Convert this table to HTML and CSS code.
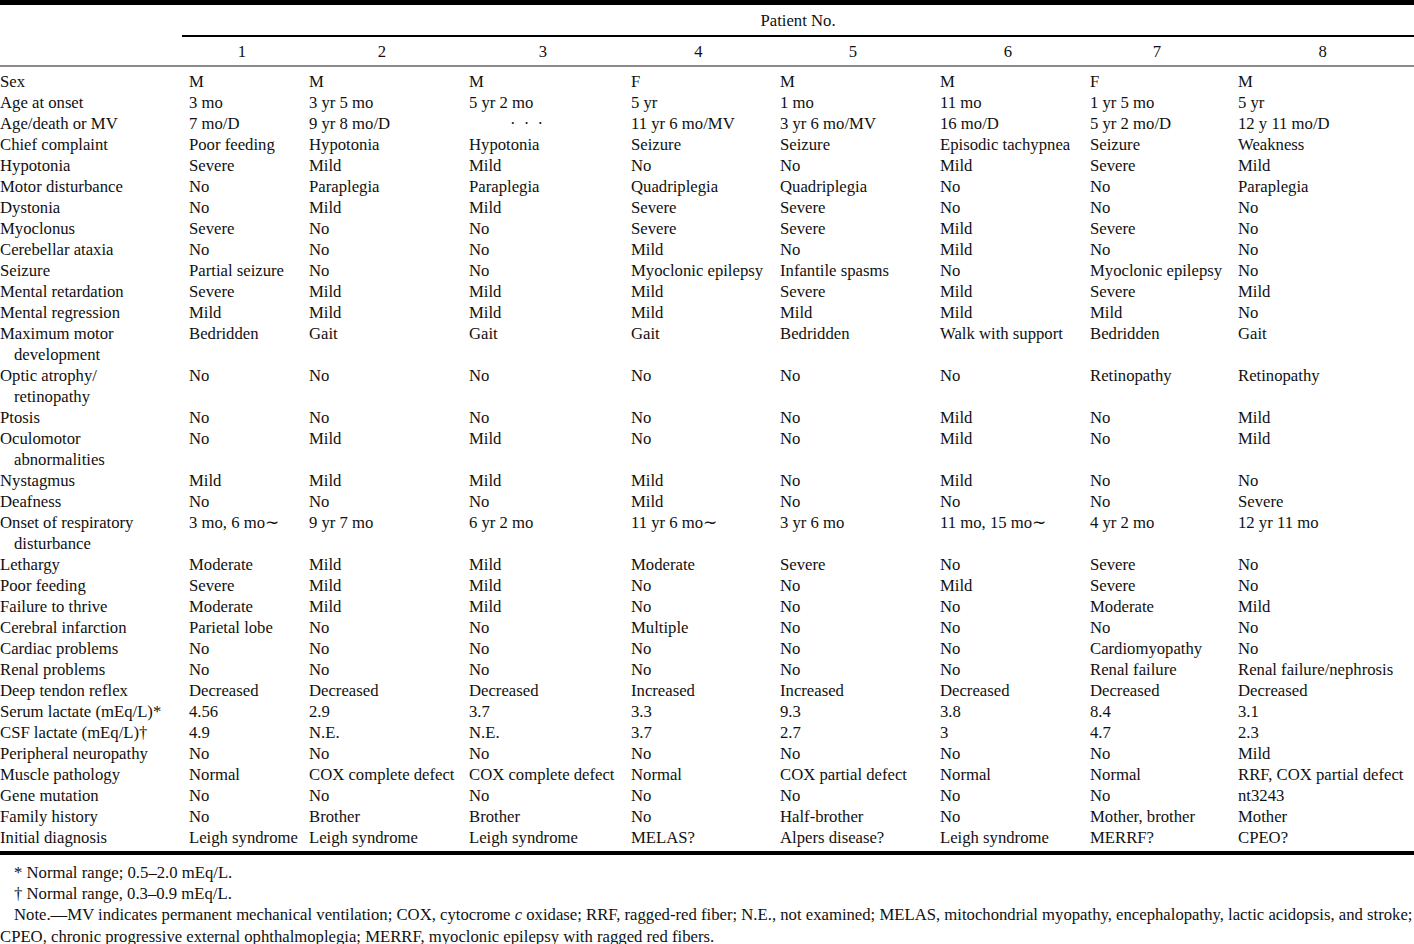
FILE: index.html
```html
<!DOCTYPE html>
<html>
<head>
<meta charset="utf-8">
<link rel="stylesheet" href="styles.css">
</head>
<body>
<table class="tbl">
<colgroup>
<col class="c-label"><col class="c1"><col class="c2"><col class="c3"><col class="c4"><col class="c5"><col class="c6"><col class="c7"><col class="c8">
</colgroup>
<thead>
<tr class="h1"><th></th><th colspan="8" class="span">Patient No.</th></tr>
<tr class="h2"><th></th><th>1</th><th>2</th><th>3</th><th>4</th><th>5</th><th>6</th><th>7</th><th>8</th></tr>
</thead>
<tbody>
<tr class="first"><td class="lab">Sex</td><td>M</td><td>M</td><td>M</td><td>F</td><td>M</td><td>M</td><td>F</td><td>M</td></tr>
<tr><td class="lab">Age at onset</td><td>3 mo</td><td>3 yr 5 mo</td><td>5 yr 2 mo</td><td>5 yr</td><td>1 mo</td><td>11 mo</td><td>1 yr 5 mo</td><td>5 yr</td></tr>
<tr><td class="lab">Age/death or MV</td><td>7 mo/D</td><td>9 yr 8 mo/D</td><td><span class="dots">· · ·</span></td><td>11 yr 6 mo/MV</td><td>3 yr 6 mo/MV</td><td>16 mo/D</td><td>5 yr 2 mo/D</td><td>12 y 11 mo/D</td></tr>
<tr><td class="lab">Chief complaint</td><td>Poor feeding</td><td>Hypotonia</td><td>Hypotonia</td><td>Seizure</td><td>Seizure</td><td>Episodic tachypnea</td><td>Seizure</td><td>Weakness</td></tr>
<tr><td class="lab">Hypotonia</td><td>Severe</td><td>Mild</td><td>Mild</td><td>No</td><td>No</td><td>Mild</td><td>Severe</td><td>Mild</td></tr>
<tr><td class="lab">Motor disturbance</td><td>No</td><td>Paraplegia</td><td>Paraplegia</td><td>Quadriplegia</td><td>Quadriplegia</td><td>No</td><td>No</td><td>Paraplegia</td></tr>
<tr><td class="lab">Dystonia</td><td>No</td><td>Mild</td><td>Mild</td><td>Severe</td><td>Severe</td><td>No</td><td>No</td><td>No</td></tr>
<tr><td class="lab">Myoclonus</td><td>Severe</td><td>No</td><td>No</td><td>Severe</td><td>Severe</td><td>Mild</td><td>Severe</td><td>No</td></tr>
<tr><td class="lab">Cerebellar ataxia</td><td>No</td><td>No</td><td>No</td><td>Mild</td><td>No</td><td>Mild</td><td>No</td><td>No</td></tr>
<tr><td class="lab">Seizure</td><td>Partial seizure</td><td>No</td><td>No</td><td>Myoclonic epilepsy</td><td>Infantile spasms</td><td>No</td><td>Myoclonic epilepsy</td><td>No</td></tr>
<tr><td class="lab">Mental retardation</td><td>Severe</td><td>Mild</td><td>Mild</td><td>Mild</td><td>Severe</td><td>Mild</td><td>Severe</td><td>Mild</td></tr>
<tr><td class="lab">Mental regression</td><td>Mild</td><td>Mild</td><td>Mild</td><td>Mild</td><td>Mild</td><td>Mild</td><td>Mild</td><td>No</td></tr>
<tr><td class="lab">Maximum motor<br>development</td><td>Bedridden</td><td>Gait</td><td>Gait</td><td>Gait</td><td>Bedridden</td><td>Walk with support</td><td>Bedridden</td><td>Gait</td></tr>
<tr><td class="lab">Optic atrophy/<br>retinopathy</td><td>No</td><td>No</td><td>No</td><td>No</td><td>No</td><td>No</td><td>Retinopathy</td><td>Retinopathy</td></tr>
<tr><td class="lab">Ptosis</td><td>No</td><td>No</td><td>No</td><td>No</td><td>No</td><td>Mild</td><td>No</td><td>Mild</td></tr>
<tr><td class="lab">Oculomotor<br>abnormalities</td><td>No</td><td>Mild</td><td>Mild</td><td>No</td><td>No</td><td>Mild</td><td>No</td><td>Mild</td></tr>
<tr><td class="lab">Nystagmus</td><td>Mild</td><td>Mild</td><td>Mild</td><td>Mild</td><td>No</td><td>Mild</td><td>No</td><td>No</td></tr>
<tr><td class="lab">Deafness</td><td>No</td><td>No</td><td>No</td><td>Mild</td><td>No</td><td>No</td><td>No</td><td>Severe</td></tr>
<tr><td class="lab">Onset of respiratory<br>disturbance</td><td>3 mo, 6 mo∼</td><td>9 yr 7 mo</td><td>6 yr 2 mo</td><td>11 yr 6 mo∼</td><td>3 yr 6 mo</td><td>11 mo, 15 mo∼</td><td>4 yr 2 mo</td><td>12 yr 11 mo</td></tr>
<tr><td class="lab">Lethargy</td><td>Moderate</td><td>Mild</td><td>Mild</td><td>Moderate</td><td>Severe</td><td>No</td><td>Severe</td><td>No</td></tr>
<tr><td class="lab">Poor feeding</td><td>Severe</td><td>Mild</td><td>Mild</td><td>No</td><td>No</td><td>Mild</td><td>Severe</td><td>No</td></tr>
<tr><td class="lab">Failure to thrive</td><td>Moderate</td><td>Mild</td><td>Mild</td><td>No</td><td>No</td><td>No</td><td>Moderate</td><td>Mild</td></tr>
<tr><td class="lab">Cerebral infarction</td><td>Parietal lobe</td><td>No</td><td>No</td><td>Multiple</td><td>No</td><td>No</td><td>No</td><td>No</td></tr>
<tr><td class="lab">Cardiac problems</td><td>No</td><td>No</td><td>No</td><td>No</td><td>No</td><td>No</td><td>Cardiomyopathy</td><td>No</td></tr>
<tr><td class="lab">Renal problems</td><td>No</td><td>No</td><td>No</td><td>No</td><td>No</td><td>No</td><td>Renal failure</td><td>Renal failure/nephrosis</td></tr>
<tr><td class="lab">Deep tendon reflex</td><td>Decreased</td><td>Decreased</td><td>Decreased</td><td>Increased</td><td>Increased</td><td>Decreased</td><td>Decreased</td><td>Decreased</td></tr>
<tr><td class="lab">Serum lactate (mEq/L)*</td><td>4.56</td><td>2.9</td><td>3.7</td><td>3.3</td><td>9.3</td><td>3.8</td><td>8.4</td><td>3.1</td></tr>
<tr><td class="lab">CSF lactate (mEq/L)†</td><td>4.9</td><td>N.E.</td><td>N.E.</td><td>3.7</td><td>2.7</td><td>3</td><td>4.7</td><td>2.3</td></tr>
<tr><td class="lab">Peripheral neuropathy</td><td>No</td><td>No</td><td>No</td><td>No</td><td>No</td><td>No</td><td>No</td><td>Mild</td></tr>
<tr><td class="lab">Muscle pathology</td><td>Normal</td><td>COX complete defect</td><td>COX complete defect</td><td>Normal</td><td>COX partial defect</td><td>Normal</td><td>Normal</td><td>RRF, COX partial defect</td></tr>
<tr><td class="lab">Gene mutation</td><td>No</td><td>No</td><td>No</td><td>No</td><td>No</td><td>No</td><td>No</td><td>nt3243</td></tr>
<tr><td class="lab">Family history</td><td>No</td><td>Brother</td><td>Brother</td><td>No</td><td>Half-brother</td><td>No</td><td>Mother, brother</td><td>Mother</td></tr>
<tr class="last"><td class="lab">Initial diagnosis</td><td>Leigh syndrome</td><td>Leigh syndrome</td><td>Leigh syndrome</td><td>MELAS?</td><td>Alpers disease?</td><td>Leigh syndrome</td><td>MERRF?</td><td>CPEO?</td></tr>
</tbody>
</table>
<div class="notes">
<p class="fn">* Normal range; 0.5–2.0 mEq/L.</p>
<p class="fn">† Normal range, 0.3–0.9 mEq/L.</p>
<p class="fn note"><span>Note.—MV indicates permanent mechanical ventilation; COX, cytocrome </span><i>c</i><span> oxidase; RRF, ragged-red fiber; N.E., not examined; MELAS, mitochondrial myopathy, encephalopathy, lactic acidopsis, and stroke;</span><br><span>CPEO, chronic progressive external ophthalmoplegia; MERRF, myoclonic epilepsy with ragged red fibers.</span></p>
</div>
</body>
</html>
```

FILE: styles.css
```css
html, body {
  margin: 0;
  padding: 0;
  background: #fff;
}
body {
  font-family: "Liberation Serif", "Times New Roman", serif;
  font-size: 16.7px;
  line-height: 21px;
  color: #111;
  width: 1414px;
}
.tbl {
  width: 1414px;
  table-layout: fixed;
  border-collapse: separate;
  border-spacing: 0;
  border-top: 5px solid #000;
  border-bottom: 4px solid #000;
}
.c-label { width: 182px; }
.c1 { width: 120px; }
.c2 { width: 160px; }
.c3 { width: 162px; }
.c4 { width: 149px; }
.c5 { width: 160px; }
.c6 { width: 150px; }
.c7 { width: 148px; }
.c8 { width: 183px; }
th {
  font-weight: normal;
  text-align: center;
  padding: 0;
  vertical-align: middle;
}
.h1 th {
  height: 29px;
  padding-top: 1px;
}
.h1 th.span {
  border-bottom: 2px solid #000;
}
.h2 th {
  height: 28px;
  border-bottom: 2px solid #8a8a8a;
}
td {
  padding: 0 0 0 7px;
  vertical-align: top;
  white-space: nowrap;
  text-align: left;
}
td.lab {
  padding-left: 14px;
  text-indent: -14px;
}
tr.first td {
  padding-top: 4px;
}
tr.last td {
  padding-bottom: 3px;
}
.dots {
  margin-left: 41px;
  letter-spacing: 2px;
}
.notes {
  padding-top: 7px;
}
.fn {
  margin: 0;
  text-indent: 14px;
}
.note {
  white-space: nowrap;
  line-height: 22px;
}
```
